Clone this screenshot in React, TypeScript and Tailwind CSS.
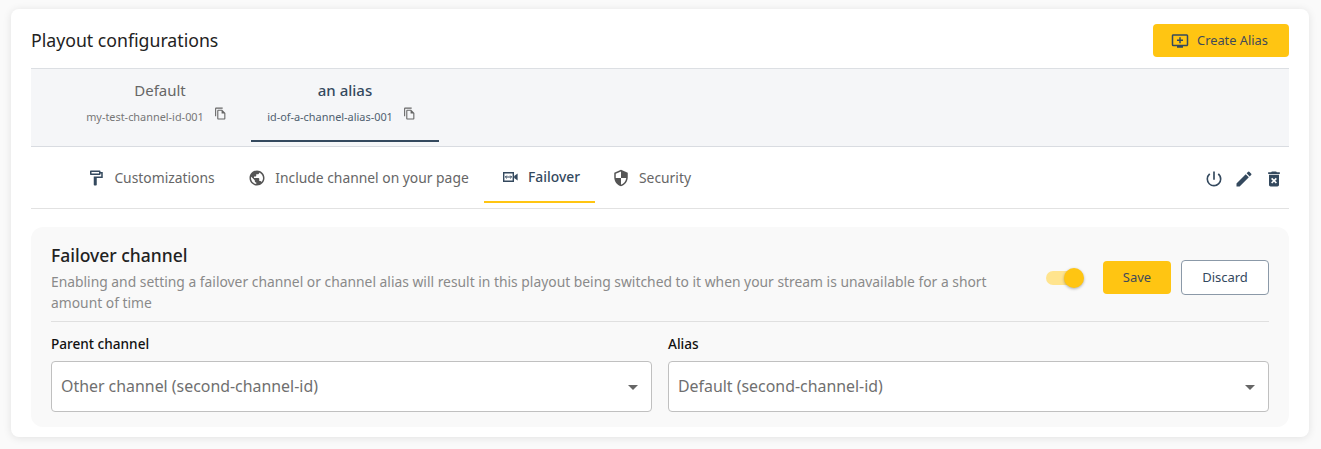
import {
  MdArrowDropDown,
  MdDeleteForever,
  MdEdit,
  MdOutlineAddToQueue,
  MdOutlineFileCopy,
  MdOutlineFormatPaint,
  MdPowerSettingsNew,
  MdPublic,
  MdSecurity,
} from 'react-icons/md';

const FailoverIcon = () => (
  <svg width="18" height="18" viewBox="0 0 18 18" className="text-[#34495e]">
    <path d="M2.7 4.7h9.6v8.6H2.7z" fill="none" stroke="currentColor" strokeWidth="1.4" />
    <path d="M13.2 8 16.6 5.4v7.2L13.2 10z" fill="currentColor" />
    <path d="M4.4 9h6.2M5.8 7.6 4.4 9l1.4 1.4M9.2 7.6 10.6 9l-1.4 1.4" fill="none" stroke="currentColor" strokeWidth="1" />
  </svg>
);

const aliases = [
  { name: 'Default', id: 'my-test-channel-id-001', active: false, width: 'w-[182px]' },
  { name: 'an alias', id: 'id-of-a-channel-alias-001', active: true, width: 'w-[188px]' },
];

const tabs = [
  { label: 'Customizations', icon: <MdOutlineFormatPaint size={18} className="text-[#34495e]" />, width: 'w-[156px]' },
  { label: 'Include channel on your page', icon: <MdPublic size={18} className="text-[#555]" />, width: 'w-[255px] pl-[4px]' },
  { label: 'Failover', icon: <FailoverIcon />, width: 'w-[111px] pl-[2px]', active: true },
  { label: 'Security', icon: <MdSecurity size={18} className="text-[#555]" />, width: 'w-[113px]' },
];

const SelectBox = ({ label, value }: { label: string; value: string }) => (
  <div className="min-w-0 flex-1">
    <div className="mb-[7px] text-[13.6px] leading-[20px] font-medium text-[#111]">{label}</div>
    <div className="flex h-[51px] items-center justify-between rounded border border-[#c0c0c0] bg-white pr-[6px] pl-[9px]">
      <span className="text-[15.9px] text-[#6f6f6f]">{value}</span>
      <MdArrowDropDown size={24} className="text-[#666]" />
    </div>
  </div>
);

export default function App() {
  return (
    <div
      className="h-[449px] w-[1321px] overflow-hidden bg-[#fafafa] pt-[9px] pl-[11px]"
      style={{ fontFamily: '"Noto Sans", "Open Sans", sans-serif' }}
    >
      <div className="h-[428px] w-[1298px] rounded-lg bg-white px-5 shadow-[0_1px_8px_rgba(0,0,0,0.1)]">
        {/* Header */}
        <div className="flex h-[60px] items-center justify-between border-b border-[#dcdfe3] pt-[4px]">
          <h1 className="text-[17.7px] font-normal text-[#222]">Playout configurations</h1>
          <button
            type="button"
            className="flex h-[33px] w-[136px] items-center justify-center gap-[8px] rounded bg-[#ffc512] pr-[3px] text-[12.8px] text-[#3f4a5a]"
          >
            <MdOutlineAddToQueue size={18} className="text-[#34495e]" />
            Create Alias
          </button>
        </div>

        {/* Aliases */}
        <div className="flex h-[78px] border-b border-[#d9dce1] bg-[#f5f6f8] pl-[38px]">
          {aliases.map((alias) => (
            <div
              key={alias.id}
              className={`flex h-[73px] flex-col items-center pt-[9px] ${alias.width} ${
                alias.active ? 'border-b-2 border-[#34495e]' : ''
              }`}
            >
              <div className={`text-[15px] leading-[24px] ${alias.active ? 'font-medium text-[#34495e]' : 'text-[#666]'}`}>
                {alias.name}
              </div>
              <div className="mt-[5px] mr-[7px] flex items-center gap-[10px]">
                <span className={`text-[10.9px] ${alias.active ? 'text-[#4f5f70]' : 'text-[#777]'}`}>{alias.id}</span>
                <MdOutlineFileCopy size={13} className="mb-[7px] text-[#666]" />
              </div>
            </div>
          ))}
        </div>

        {/* Tabs */}
        <div className="flex h-[62px] items-start justify-between border-b border-[#e2e2e2] pr-[5px] pl-[42px]">
          <div className="flex">
            {tabs.map((tab) => (
              <div
                key={tab.label}
                className={`flex h-[56px] items-center justify-center gap-[9px] pt-[6px] text-[13.85px] ${tab.width} ${
                  tab.active ? 'border-b-2 border-[#ffc512] font-medium text-[#34495e]' : 'text-[#666]'
                }`}
              >
                {tab.icon}
                {tab.label}
              </div>
            ))}
          </div>
          <div className="flex h-[62px] items-center gap-[10px] pt-[2px] text-[#34495e]">
            <MdPowerSettingsNew size={20} />
            <MdEdit size={20} />
            <MdDeleteForever size={20} />
          </div>
        </div>

        {/* Failover panel */}
        <div className="mt-[18px] h-[200px] rounded-xl bg-[#f9f9f9] px-5 pt-[15px]">
          <div className="flex h-[80px] items-start justify-between border-b border-[#e0e0e0]">
            <div className="w-[960px]">
              <h2 className="text-[17.5px] leading-[26px] font-medium text-[#222]">Failover channel</h2>
              <p className="mt-[3px] text-[13.85px] leading-[21px] text-[#8a8a8a]">
                Enabling and setting a failover channel or channel alias will result in this playout being switched to it
                when your stream is unavailable for a short amount of time
              </p>
            </div>
            <div className="mt-[18px] flex items-center">
              <div className="relative mr-[23px] h-[14px] w-[34px] rounded-full bg-[#ffe48e]">
                <span className="absolute top-[-3px] right-[-4px] size-5 rounded-full bg-[#ffc512] shadow-[0_1px_3px_rgba(0,0,0,0.3)]" />
              </div>
              <button type="button" className="h-[33px] w-[68px] rounded bg-[#ffc512] text-[13px] text-[#3f4a5a]">
                Save
              </button>
              <button
                type="button"
                className="ml-[10px] h-[35px] w-[88px] rounded border border-[#8b99a8] bg-white text-[13px] text-[#34495e]"
              >
                Discard
              </button>
            </div>
          </div>
          <div className="mt-[12px] flex gap-4">
            <SelectBox label="Parent channel" value="Other channel (second-channel-id)" />
            <SelectBox label="Alias" value="Default (second-channel-id)" />
          </div>
        </div>
      </div>
    </div>
  );
}
